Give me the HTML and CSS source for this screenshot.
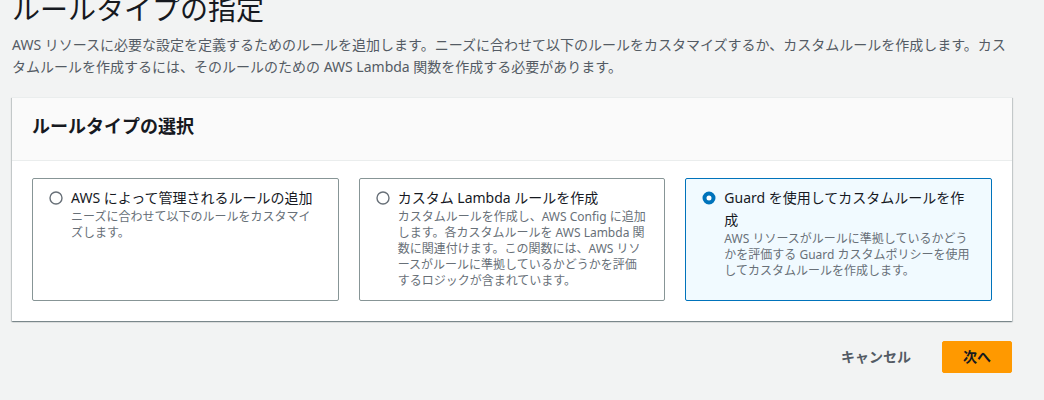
FILE: index.html
```html
<!DOCTYPE html>
<html lang="ja">
<head>
    <meta charset="utf-8">
    <title>ルールタイプの指定</title>
    <link rel="stylesheet" href="styles.css">
</head>
<body>
    <div class="page">
        <h1 class="page-title">ルールタイプの指定</h1>
        <p class="page-desc">AWS リソースに必要な設定を定義するためのルールを追加します。ニーズに合わせて以下のルールをカスタマイズするか、カスタムルールを作成します。カスタムルールを作成するには、そのルールのための AWS Lambda 関数を作成する必要があります。</p>

        <div class="container">
            <div class="container-header">
                <h2>ルールタイプの選択</h2>
            </div>
            <div class="container-body">
                <div class="tiles">
                    <label class="tile">
                        <svg class="radio" width="14" height="14" viewBox="0 0 14 14"><circle cx="7" cy="7" r="6" fill="#fff" stroke="#687078" stroke-width="1.4"/></svg>
                        <span class="tile-text">
                            <span class="tile-label">AWS によって管理されるルールの追加</span>
                            <span class="tile-desc">ニーズに合わせて以下のルールをカスタマイズします。</span>
                        </span>
                    </label>
                    <label class="tile">
                        <svg class="radio" width="14" height="14" viewBox="0 0 14 14"><circle cx="7" cy="7" r="6" fill="#fff" stroke="#687078" stroke-width="1.4"/></svg>
                        <span class="tile-text">
                            <span class="tile-label">カスタム Lambda ルールを作成</span>
                            <span class="tile-desc">カスタムルールを作成し、AWS Config に追加します。各カスタムルールを AWS Lambda 関数に関連付けます。この関数には、AWS リソースがルールに準拠しているかどうかを評価するロジックが含まれています。</span>
                        </span>
                    </label>
                    <label class="tile selected">
                        <svg class="radio" width="14" height="14" viewBox="0 0 14 14"><circle cx="7" cy="7" r="4.5" fill="#fff" stroke="#0073bb" stroke-width="4"/></svg>
                        <span class="tile-text">
                            <span class="tile-label">Guard を使用してカスタムルールを作成</span>
                            <span class="tile-desc">AWS リソースがルールに準拠しているかどうかを評価する Guard カスタムポリシーを使用してカスタムルールを作成します。</span>
                        </span>
                    </label>
                </div>
            </div>
        </div>

        <div class="actions">
            <button class="btn-link">キャンセル</button>
            <button class="btn-primary">次へ</button>
        </div>
    </div>
</body>
</html>
```

FILE: styles.css
```css
body {
    margin: 0;
    background-color: #f2f3f3;
    font-family: "Noto Sans", "Noto Sans CJK JP", sans-serif;
    color: #16191f;
}
.page {
    width: 1000px;
    margin-left: 12px;
}
.page-title {
    font-size: 28px;
    font-weight: 400;
    line-height: 36px;
    margin: -9px 0 0 0;
}
.page-desc {
    font-size: 14px;
    line-height: 22px;
    color: #545b64;
    margin: 7px 0 19px 0;
}
.container {
    background-color: #fff;
    border-top: 1px solid #eaeded;
    box-shadow: 0 1px 1px 0 rgba(0, 28, 36, 0.3), 1px 1px 1px 0 rgba(0, 28, 36, 0.15), -1px 1px 1px 0 rgba(0, 28, 36, 0.15);
}
.container-header {
    background-color: #fafafa;
    border-bottom: 1px solid #eaeded;
    height: 63px;
    box-sizing: border-box;
    padding: 0 20px 6px 20px;
    display: flex;
    align-items: center;
}
.container-header h2 {
    margin: 0;
    font-size: 18px;
    font-weight: 700;
    line-height: 22px;
}
.container-body {
    padding: 17px 20px 20px 20px;
}
.tiles {
    display: grid;
    grid-template-columns: repeat(3, 1fr);
    gap: 20px;
}
.tile {
    display: flex;
    align-items: flex-start;
    gap: 8px;
    height: 123px;
    box-sizing: border-box;
    border: 1px solid #879596;
    border-radius: 2px;
    padding: 8px 17px 12px 16px;
    cursor: pointer;
}
.tile.selected {
    border-color: #0073bb;
    background-color: #f1faff;
}
.radio {
    flex: none;
    margin-top: 4px;
}
.tile-text {
    display: flex;
    flex-direction: column;
}
.tile-label {
    font-size: 14px;
    line-height: 22px;
}
.tile-desc {
    font-size: 12px;
    line-height: 16px;
    color: #687078;
}
.actions {
    display: flex;
    justify-content: flex-end;
    align-items: center;
    gap: 10px;
    margin-top: 20px;
}
.actions button {
    font-family: inherit;
    font-size: 14px;
    font-weight: 700;
    line-height: 22px;
    padding: 4px 20px;
    border-radius: 2px;
    cursor: pointer;
}
.btn-link {
    background: none;
    border: 1px solid transparent;
    color: #545b64;
}
.btn-primary {
    background-color: #ff9900;
    border: 1px solid #ff9900;
    color: #16191f;
}
```
